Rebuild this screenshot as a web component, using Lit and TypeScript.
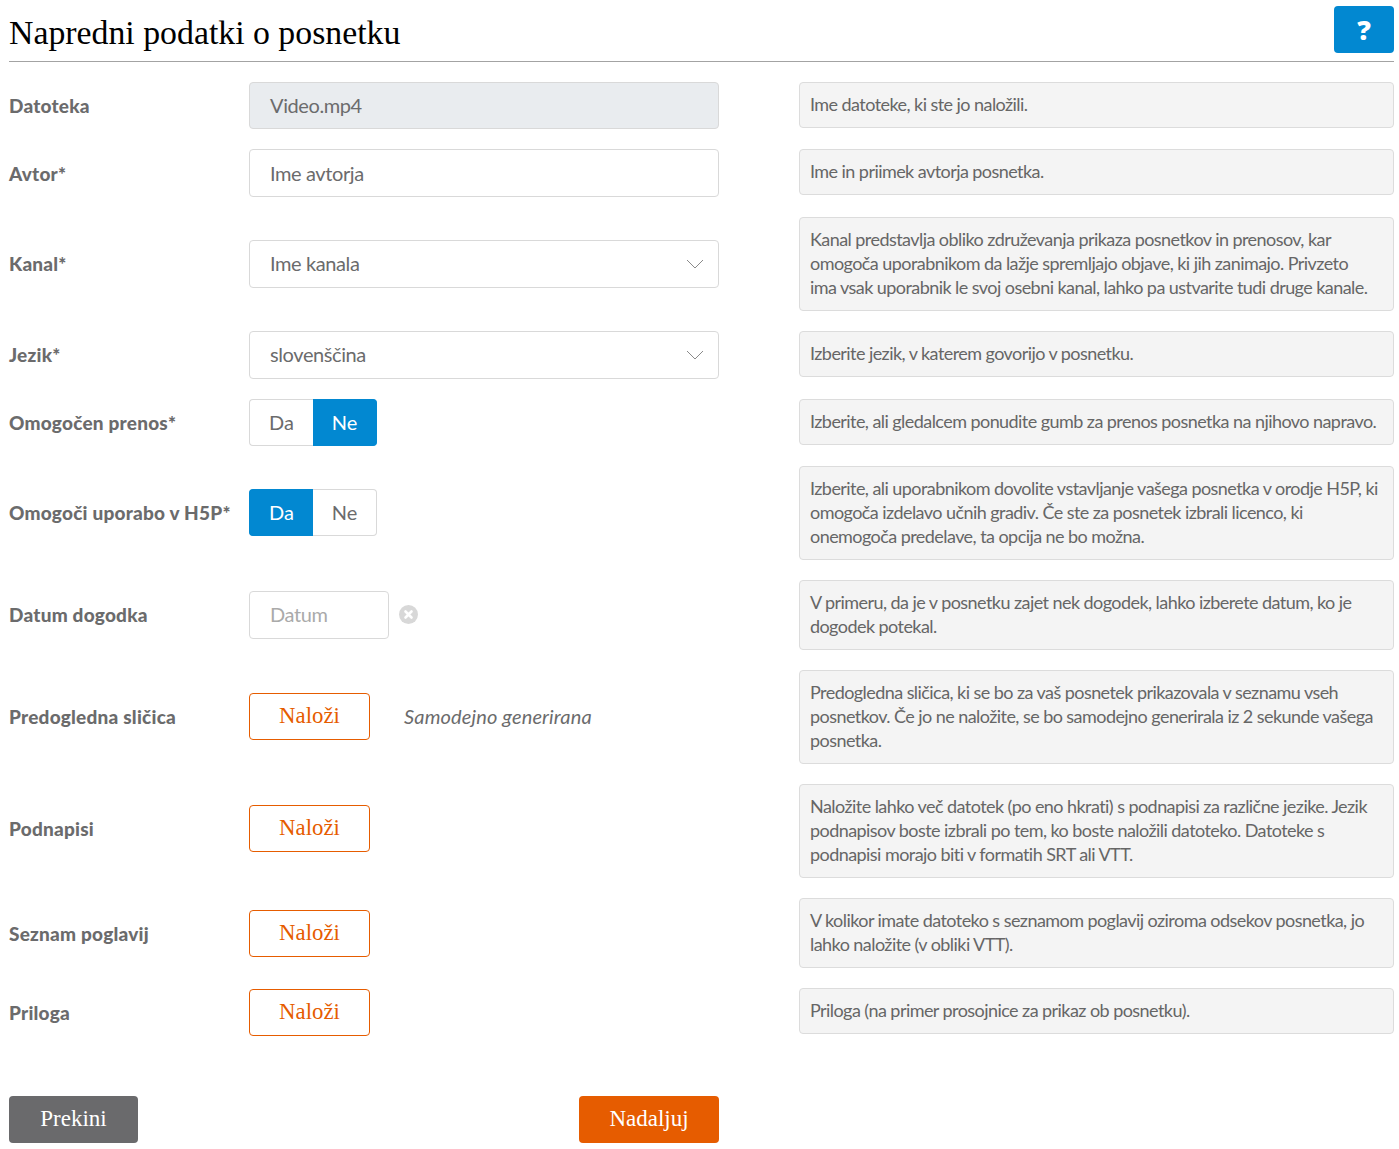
import { LitElement, html, css } from "lit";
import { customElement } from "lit/decorators.js";

const chevron = html`<svg class="chev" width="18" height="10" viewBox="0 0 18 10"><path d="M1 1l8 8 8-8" fill="none" stroke="#8a8a8a" stroke-width="1"/></svg>`;

@customElement("app-root")
export class AppRoot extends LitElement {
  static styles = css`
    :host { display: block; background: #fff; min-height: 1149px; padding: 0 5px 0 9px; box-sizing: border-box; font-family: "Lato", "Liberation Sans", sans-serif; color: #6b6b6c; }
    * { box-sizing: border-box; }
    .head { display: flex; justify-content: space-between; align-items: flex-end; height: 62px; border-bottom: 1px solid #a3a3a3; padding-bottom: 8px; }
    h1 { margin: 0; font: 400 33.8px/40px "Liberation Serif", serif; color: #000; }
    .help { width: 60px; height: 47px; background: #0288d1; border-radius: 4px; color: #fff; font: 800 27px/47px "Open Sans", sans-serif; text-align: center; margin-bottom: 0; }
    .form { display: flex; flex-direction: column; gap: 20px; margin-top: 20px; }
    .row { display: grid; grid-template-columns: 710px 595px; column-gap: 80px; align-items: center; }
    .left { display: flex; align-items: center; }
    .label { width: 240px; flex: none; font-size: 19px; font-weight: 900; white-space: nowrap; letter-spacing: 0.22px; }
    .label.up1 { margin-bottom: 1px; }
    .hint { align-self: start; background: #f4f4f4; border: 1px solid #dcdcdc; border-radius: 4px; padding: 9px 10px 11px; font-size: 18px; line-height: 24px; white-space: nowrap; color: #666; letter-spacing: -0.56px; }
    .field { width: 470px; height: 48px; border: 1px solid #d9d9d9; border-radius: 4px; padding: 0 20px 2px; font-size: 20px; letter-spacing: -0.4px; display: flex; align-items: center; justify-content: space-between; }
    .field.low { padding-bottom: 0; }
    .field.disabled { background: #e9ecef; height: 47px; }
    .field.date { width: 140px; color: #aaa; }
    .chev { margin-right: -6px; margin-top: 2px; }
    .clear { margin-left: 10px; margin-top: -2px; }
    .toggle { display: flex; width: 128px; height: 47px; margin-bottom: 1px; }
    .toggle.flat { margin-bottom: 0; }
    .toggle span { width: 64px; display: flex; align-items: center; justify-content: center; font-size: 20px; padding-bottom: 2px; border: 1px solid #d9d9d9; }
    .toggle span:first-child { border-radius: 4px 0 0 4px; border-right: 0; }
    .toggle span:last-child { border-radius: 0 4px 4px 0; border-left: 0; }
    .toggle span.on { background: #0288d1; border-color: #0288d1; color: #fff; }
    .up { width: 121px; height: 47px; border: 1px solid #e65c00; border-radius: 4px; color: #e65c00; font: 400 22.8px/43px "Liberation Serif", serif; text-align: center; }
    .up.lift { margin-bottom: 1px; }
    .auto { margin-left: 34px; padding-bottom: 2px; font-size: 20px; font-style: italic; letter-spacing: 0.15px; }
    .push-up { margin-bottom: 5px; }
    .push-down { margin-top: 1px; }
    .foot { display: flex; justify-content: space-between; width: 710px; margin-top: 60px; }
    .btn { height: 47px; border-radius: 4px; color: #fff; font: 400 23px/45px "Liberation Serif", serif; text-align: center; }
    .gray { width: 129px; background: #6a6a6c; }
    .orange { width: 140px; background: #e65c00; }
  `;

  render() {
    return html`
      <div class="head"><h1>Napredni podatki o posnetku</h1><div class="help">?</div></div>
      <div class="form">
        <div class="row"><div class="left"><div class="label">Datoteka</div><div class="field disabled">Video.mp4</div></div>
          <div class="hint">Ime datoteke, ki ste jo naložili.</div></div>
        <div class="row"><div class="left"><div class="label">Avtor*</div><div class="field low">Ime avtorja</div></div>
          <div class="hint">Ime in priimek avtorja posnetka.</div></div>
        <div class="row"><div class="left"><div class="label up1">Kanal*</div><div class="field">Ime kanala${chevron}</div></div>
          <div class="hint">Kanal predstavlja obliko združevanja prikaza posnetkov in prenosov, kar<br>omogoča uporabnikom da lažje spremljajo objave, ki jih zanimajo. Privzeto<br>ima vsak uporabnik le svoj osebni kanal, lahko pa ustvarite tudi druge kanale.</div></div>
        <div class="row"><div class="left"><div class="label up1">Jezik*</div><div class="field">slovenščina${chevron}</div></div>
          <div class="hint">Izberite jezik, v katerem govorijo v posnetku.</div></div>
        <div class="row"><div class="left"><div class="label">Omogočen prenos*</div><div class="toggle flat"><span>Da</span><span class="on">Ne</span></div></div>
          <div class="hint">Izberite, ali gledalcem ponudite gumb za prenos posnetka na njihovo napravo.</div></div>
        <div class="row"><div class="left"><div class="label up1">Omogoči uporabo v H5P*</div><div class="toggle"><span class="on">Da</span><span>Ne</span></div></div>
          <div class="hint">Izberite, ali uporabnikom dovolite vstavljanje vašega posnetka v orodje H5P, ki<br>omogoča izdelavo učnih gradiv. Če ste za posnetek izbrali licenco, ki<br>onemogoča predelave, ta opcija ne bo možna.</div></div>
        <div class="row"><div class="left"><div class="label up1">Datum dogodka</div><div class="field date">Datum</div>
            <svg class="clear" width="19" height="19" viewBox="0 0 19 19"><circle cx="9.5" cy="9.5" r="9.5" fill="#d8d8d8"/><path d="M6.5 6.5l6 6M12.5 6.5l-6 6" stroke="#fff" stroke-width="2.6" stroke-linecap="round"/></svg></div>
          <div class="hint">V primeru, da je v posnetku zajet nek dogodek, lahko izberete datum, ko je<br>dogodek potekal.</div></div>
        <div class="row"><div class="left"><div class="label up1">Predogledna sličica</div><div class="up lift">Naloži</div><div class="auto">Samodejno generirana</div></div>
          <div class="hint">Predogledna sličica, ki se bo za vaš posnetek prikazovala v seznamu vseh<br>posnetkov. Če jo ne naložite, se bo samodejno generirala iz 2 sekunde vašega<br>posnetka.</div></div>
        <div class="row"><div class="left push-up"><div class="label">Podnapisi</div><div class="up">Naloži</div></div>
          <div class="hint">Naložite lahko več datotek (po eno hkrati) s podnapisi za različne jezike. Jezik<br>podnapisov boste izbrali po tem, ko boste naložili datoteko. Datoteke s<br>podnapisi morajo biti v formatih SRT ali VTT.</div></div>
        <div class="row"><div class="left"><div class="label">Seznam poglavij</div><div class="up">Naloži</div></div>
          <div class="hint">V kolikor imate datoteko s seznamom poglavij oziroma odsekov posnetka, jo<br>lahko naložite (v obliki VTT).</div></div>
        <div class="row"><div class="left push-down"><div class="label">Priloga</div><div class="up">Naloži</div></div>
          <div class="hint">Priloga (na primer prosojnice za prikaz ob posnetku).</div></div>
      </div>
      <div class="foot"><div class="btn gray">Prekini</div><div class="btn orange">Nadaljuj</div></div>
    `;
  }
}
